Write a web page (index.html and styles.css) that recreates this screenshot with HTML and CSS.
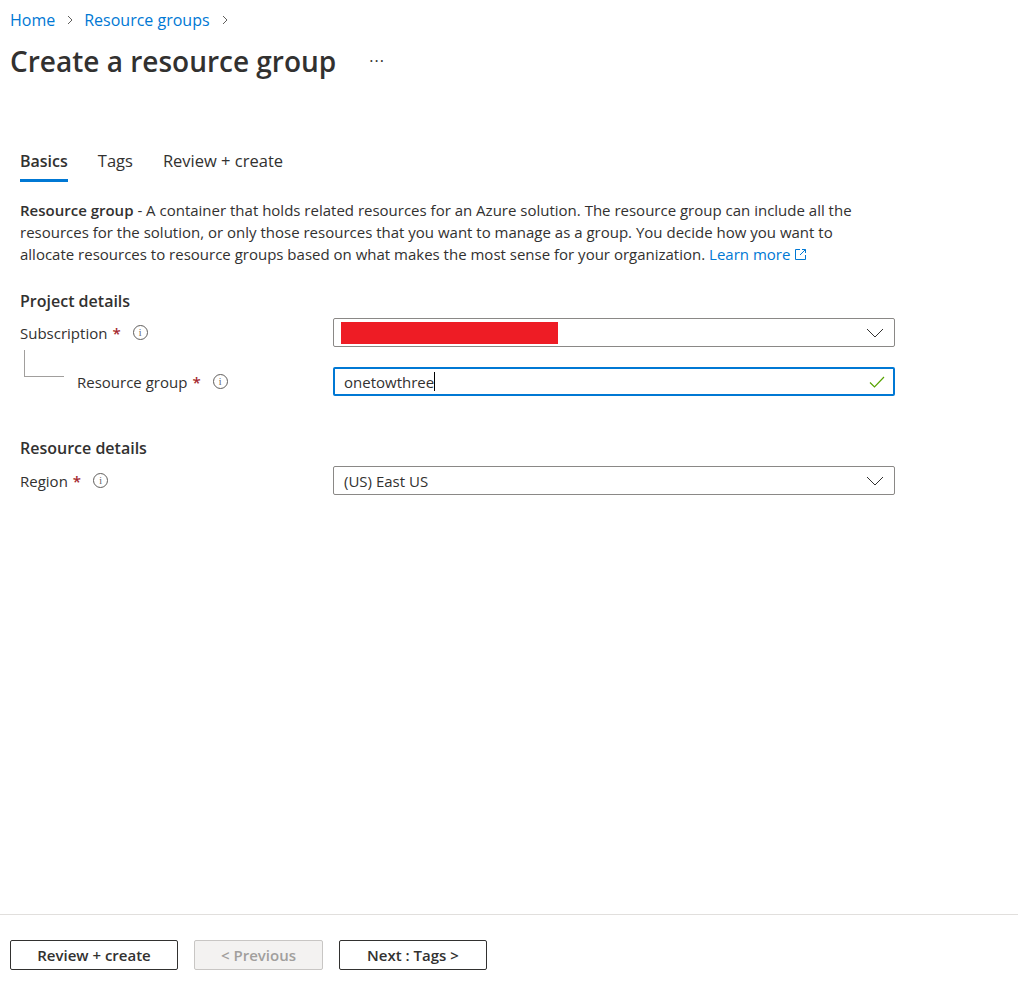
FILE: index.html
```html
<!DOCTYPE html>
<html lang="en">
<head>
<meta charset="utf-8">
<title>Create a resource group</title>
<link rel="stylesheet" href="styles.css">
</head>
<body>
<div class="page">
  <header class="header">
    <nav class="breadcrumb">
      <a class="crumb" href="#">Home</a>
      <svg class="chev" width="16" height="16" viewBox="0 0 16 16"><path d="M6 4l4 4-4 4" fill="none" stroke="#605e5c" stroke-width="1"/></svg>
      <a class="crumb" href="#">Resource groups</a>
      <svg class="chev" width="16" height="16" viewBox="0 0 16 16"><path d="M6 4l4 4-4 4" fill="none" stroke="#605e5c" stroke-width="1"/></svg>
    </nav>
    <div class="title-row">
      <h1 class="title">Create a resource group</h1>
      <span class="more">···</span>
    </div>
  </header>

  <main class="content">
    <div class="tabs">
      <div class="tab active">Basics</div>
      <div class="tab">Tags</div>
      <div class="tab">Review + create</div>
    </div>

    <p class="desc"><b>Resource group</b> - A container that holds related resources for an Azure solution. The resource group can include all the resources for the solution, or only those resources that you want to manage as a group. You decide how you want to allocate resources to resource groups based on what makes the most sense for your organization. <a class="link" href="#">Learn more<svg class="ext" width="13" height="13" viewBox="0 0 13 13"><path d="M6 1.5H1.5v10h10V7" fill="none" stroke="#0078d4"/><path d="M8 1.5h3.5V5M11.5 1.5L6 7" fill="none" stroke="#0078d4"/></svg></a></p>

    <h2 class="section">Project details</h2>
    <div class="row first">
      <div class="label">Subscription<span class="req">*</span><span class="info">i</span></div>
      <div class="field select">
        <span class="redact"></span>
        <svg class="dd" width="18" height="10" viewBox="0 0 18 10"><path d="M1 1l8 8 8-8" fill="none" stroke="#323130" stroke-width="1"/></svg>
      </div>
    </div>
    <div class="row child">
      <span class="tree"></span>
      <div class="label">Resource group<span class="req">*</span><span class="info">i</span></div>
      <div class="field input">
        <span class="value">onetowthree</span><span class="caret"></span>
        <svg class="check" width="16" height="12" viewBox="0 0 16 12"><path d="M1 6.5l4.5 4.5L15 1" fill="none" stroke="#57a300" stroke-width="1.2"/></svg>
      </div>
    </div>

    <h2 class="section section2">Resource details</h2>
    <div class="row region">
      <div class="label">Region<span class="req">*</span><span class="info">i</span></div>
      <div class="field select">
        <span class="value">(US) East US</span>
        <svg class="dd" width="18" height="10" viewBox="0 0 18 10"><path d="M1 1l8 8 8-8" fill="none" stroke="#323130" stroke-width="1"/></svg>
      </div>
    </div>
  </main>

  <footer class="footer">
    <button class="btn b1">Review + create</button>
    <button class="btn b2 disabled">&lt; Previous</button>
    <button class="btn b3">Next : Tags &gt;</button>
  </footer>
</div>
</body>
</html>
```

FILE: styles.css
```css
html, body {
  margin: 0;
  padding: 0;
  background: #ffffff;
}
body {
  font-family: "Segoe UI", "Open Sans", "Liberation Sans", sans-serif;
  color: #323130;
  font-size: 15px;
}
.page {
  width: 1018px;
  height: 982px;
  display: flex;
  flex-direction: column;
}
.header {
  padding: 8px 10px 0 10px;
}
.breadcrumb {
  display: flex;
  align-items: center;
  height: 24px;
  font-size: 16px;
}
.crumb {
  color: #0078d4;
  text-decoration: none;
}
.chev {
  margin: 0 6px 0 7px;
}
.title-row {
  display: flex;
  align-items: center;
  margin-top: 10px;
  height: 38px;
}
.title {
  margin: 0;
  font-size: 28px;
  font-weight: 600;
  color: #323130;
}
.more {
  margin-left: 33px;
  font-size: 16px;
  color: #323130;
  letter-spacing: 1px;
}
.content {
  padding: 0 20px;
  flex: 1;
}
.tabs {
  display: flex;
  gap: 30px;
  margin-top: 69px;
}
.tab {
  font-size: 16.5px;
  line-height: 24px;
  padding-bottom: 9px;
  color: #323130;
}
.tab.active {
  font-weight: 600;
  font-size: 16px;
  padding-bottom: 6px;
  border-bottom: 3px solid #0078d4;
}
.desc {
  margin: 17px 0 0 0;
  width: 860px;
  line-height: 22px;
  font-size: 15px;
}
.desc b {
  font-weight: 600;
}
.link {
  color: #0078d4;
  text-decoration: none;
}
.ext {
  margin-left: 4px;
  vertical-align: -1px;
}
.section {
  margin: 24px 0 0 0;
  font-size: 16px;
  font-weight: 600;
  line-height: 24px;
}
.section2 {
  margin-top: 40px;
}
.row {
  display: flex;
  align-items: center;
  width: 875px;
  position: relative;
}
.row.first {
  margin-top: 5px;
}
.row.child {
  margin-top: 20px;
}
.row.region {
  margin-top: 6px;
}
.label {
  width: 313px;
  flex: none;
  display: flex;
  align-items: center;
  font-size: 15px;
  box-sizing: border-box;
}
.row.child .label {
  padding-left: 57px;
}
.tree {
  position: absolute;
  left: 4px;
  top: -17px;
  width: 40px;
  height: 27px;
  box-sizing: border-box;
  border-left: 1px solid #a19f9d;
  border-bottom: 1px solid #a19f9d;
}
.req {
  color: #a4262c;
  margin-left: 5px;
  font-weight: 600;
}
.info {
  display: inline-flex;
  align-items: center;
  justify-content: center;
  width: 13px;
  height: 13px;
  border: 1px solid #605e5c;
  border-radius: 50%;
  font-size: 10px;
  line-height: 1;
  color: #605e5c;
  margin-left: 12px;
  font-family: "Liberation Serif", serif;
}
.field {
  flex: 1;
  height: 29px;
  box-sizing: border-box;
  border: 1px solid #8a8886;
  border-radius: 2px;
  display: flex;
  align-items: center;
  padding: 0 10px;
}
.field.input {
  border: 2px solid #0078d4;
  padding-left: 9px;
}
.redact {
  width: 217px;
  height: 22px;
  background: #ee1c25;
  margin-left: -3px;
}
.value {
  font-size: 15px;
  color: #323130;
}
.caret {
  width: 1px;
  height: 19px;
  background: #000;
}
.dd {
  margin-left: auto;
}
.check {
  margin-left: auto;
  margin-right: -2px;
}
.footer {
  border-top: 1px solid #e1dfdd;
  height: 68px;
  flex: none;
  display: flex;
  align-items: flex-start;
  gap: 16px;
  padding: 25px 10px 0 10px;
  box-sizing: border-box;
}
.btn {
  font-family: inherit;
  font-size: 15px;
  font-weight: 600;
  color: #323130;
  background: #ffffff;
  border: 1px solid #323130;
  border-radius: 2px;
  height: 30px;
  padding: 0 10px;
}
.b1 { width: 168px; }
.b2 { width: 129px; }
.b3 { width: 148px; }
.btn.disabled {
  background: #f3f2f1;
  color: #a19f9d;
  border-color: #c8c6c4;
}
```
